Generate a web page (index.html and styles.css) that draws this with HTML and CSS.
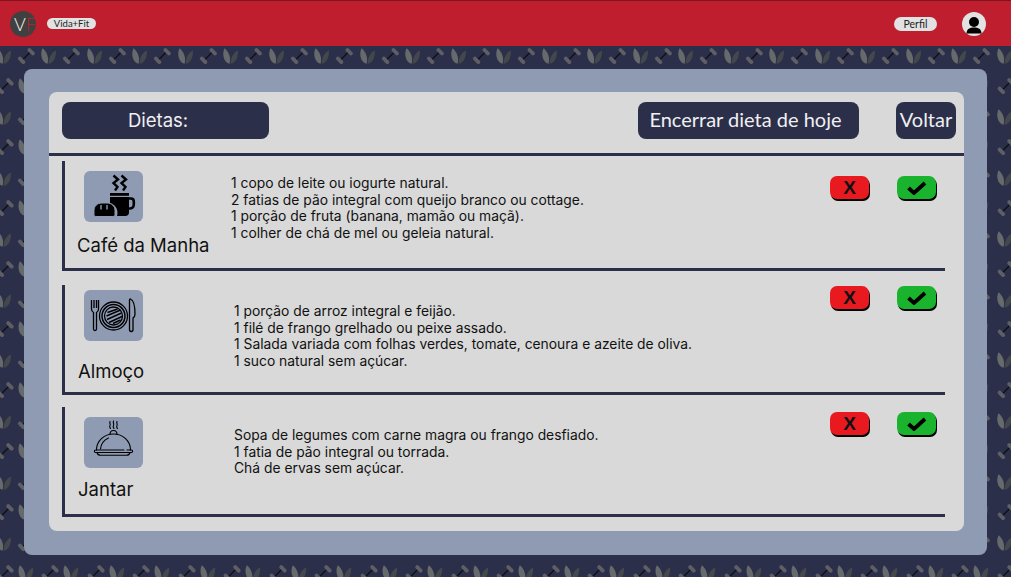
FILE: index.html
```html
<!DOCTYPE html>
<html lang="pt-BR">
<head>
    <meta charset="UTF-8">
    <meta name="viewport" content="width=device-width, initial-scale=1.0">
    <title>Vida+Fit - Dietas</title>
    <link rel="stylesheet" href="styles.css">
</head>
<body>

<header class="topbar">
    <div class="brand">
        <div class="logo"><span class="logo-v">V</span><span class="logo-f">F</span></div>
        <span class="pill pill-brand">Vida+Fit</span>
    </div>
    <div class="user">
        <span class="pill pill-perfil">Perfil</span>
        <svg class="avatar" viewBox="0 0 24 24">
            <circle cx="12" cy="12" r="12" fill="#e2e2e2"/>
            <circle cx="12" cy="10" r="5" fill="#000"/>
            <path d="M4.5 21.5c0-4.500 3.500-6 7.500-6s7.500 1.500 7.500 6z" fill="#000"/>
        </svg>
    </div>
</header>

<main class="page">
    <div class="panel">
        <section class="card">
            <div class="toolbar">
                <div class="btn btn-title">Dietas:</div>
                <button class="btn btn-end">Encerrar dieta de hoje</button>
                <button class="btn btn-back">Voltar</button>
            </div>

            <div class="meals">
                <!-- Cafe da manha -->
                <article class="meal meal-cafe">
                    <div class="meal-head">
                        <div class="meal-icon">
                            <svg viewBox="0 0 59 51" width="59" height="51">
                                <g fill="none" stroke="#000" stroke-width="2.400" stroke-linejoin="miter">
                                    <path d="M29.500 4.500l4.500 4-4.500 3.500 4 4-2.500 3.500"/>
                                    <path d="M37.500 4.500l4.500 4-4.500 3.500 4 4-2.500 3.500"/>
                                    <path d="M44 27.500h3c2 0 2.800 1 2.800 3v3c0 2.500-2 4-4 4H43" stroke-width="2.600"/>
                                </g>
                                <path d="M26 22h19v2.800H26z" fill="#000"/>
                                <path d="M26 26h19v15.500c0 2-1.500 3.500-3.500 3.500H33c1.500-4 0-11-7-13z" fill="#000"/>
                                <path d="M12 45.500c-1.500 0-2-1-2-2v-4c0-4.500 3.500-7.500 8-7.500h5c4.500 0 8 3 8 7.500v4c0 1.200-.8 2-2 2z" fill="#000" stroke="#8e9bb3" stroke-width="1"/>
                                <g stroke="#8e9bb3" stroke-width="1.400" stroke-linecap="round">
                                    <path d="M17 34.500v3.500"/>
                                    <path d="M23 34.500v3.500"/>
                                </g>
                            </svg>
                        </div>
                        <h3 class="meal-name">Café da Manha</h3>
                    </div>
                    <div class="meal-text">
                        <p>1 copo de leite ou iogurte natural.</p>
                        <p>2 fatias de pão integral com queijo branco ou cottage.</p>
                        <p>1 porção de fruta (banana, mamão ou maçã).</p>
                        <p>1 colher de chá de mel ou geleia natural.</p>
                    </div>
                    <div class="meal-actions">
                        <button class="mark mark-no">X</button>
                        <button class="mark mark-yes">
                            <svg viewBox="0 0 20 14" width="20" height="14"><path d="M1.500 7l5.500 5L18 2" fill="none" stroke="#000" stroke-width="3.800"/></svg>
                        </button>
                    </div>
                </article>

                <!-- Almoco -->
                <article class="meal meal-almoco">
                    <div class="meal-head">
                        <div class="meal-icon">
                            <svg viewBox="0 0 59 51" width="59" height="51">
                                <g fill="none" stroke="#000" stroke-width="1.300">
                                    <path d="M7.500 10v9c0 2 1 3 2 3.500V39c0 1 .5 1.500 1.500 1.500s1.500-.5 1.500-1.500V22.500c1-.5 2-1.500 2-3.500v-9"/>
                                    <path d="M10 10v8M12.500 10v8"/>
                                    <circle cx="29.500" cy="26" r="14"/>
                                    <circle cx="29.500" cy="26" r="11.500" stroke-width="1.500"/>
                                    <circle cx="29.500" cy="26" r="9"/>
                                    <path d="M23.500 22.500l10-3.500M22.500 26l14-6M23 29.500l14.500-6.500M25 32.500l13-6M29 33.500l7.500-3.500" stroke-width="1.400"/>
                                    <path d="M46.500 9c2.500 1 4.500 6 4.500 15 0 2-1 3.500-2 4v11.500c0 1.200-.7 2-1.700 2s-1.800-.8-1.800-2V10c0-.7.400-1 1-1z"/>
                                </g>
                            </svg>
                        </div>
                        <h3 class="meal-name">Almoço</h3>
                    </div>
                    <div class="meal-text">
                        <p>1 porção de arroz integral e feijão.</p>
                        <p>1 filé de frango grelhado ou peixe assado.</p>
                        <p>1 Salada variada com folhas verdes, tomate, cenoura e azeite de oliva.</p>
                        <p>1 suco natural sem açúcar.</p>
                    </div>
                    <div class="meal-actions">
                        <button class="mark mark-no">X</button>
                        <button class="mark mark-yes">
                            <svg viewBox="0 0 20 14" width="20" height="14"><path d="M1.500 7l5.500 5L18 2" fill="none" stroke="#000" stroke-width="3.800"/></svg>
                        </button>
                    </div>
                </article>

                <!-- Jantar -->
                <article class="meal meal-jantar">
                    <div class="meal-head">
                        <div class="meal-icon">
                            <svg viewBox="0 0 59 51" width="59" height="51">
                                <g fill="none" stroke="#000" stroke-width="1.100" stroke-linecap="round" stroke-linejoin="round">
                                    <path d="M26 4.500c-1 1.500 1 2.500 0 4s0 2 .5 3"/>
                                    <path d="M29.500 4c-1 1.500 1 3 0 4.500s0 2.500.5 3"/>
                                    <path d="M33 4.500c-1 1.500 1 2.500 0 4s0 2 .5 3"/>
                                    <path d="M26 17.500c0-2.500 1.500-4 3.500-4s3.500 1.500 3.500 4"/>
                                    <path d="M12.500 33c0-9 7.500-16 17-16s17 7 17 16"/>
                                    <path d="M16.500 32c.5-5 3.500-9 8-11"/>
                                    <path d="M12 33h28M43 33h4.500c1.500 0 1.500 2.500 0 2.500h-36c-1.500 0-1.500-2.500 0-2.500"/>
                                    <path d="M13 35.500c.5 1.800 2 2.800 3.500 2.800h26c1.500 0 3-1 3.500-2.800"/>
                                </g>
                            </svg>
                        </div>
                        <h3 class="meal-name">Jantar</h3>
                    </div>
                    <div class="meal-text">
                        <p>Sopa de legumes com carne magra ou frango desfiado.</p>
                        <p>1 fatia de pão integral ou torrada.</p>
                        <p>Chá de ervas sem açúcar.</p>
                    </div>
                    <div class="meal-actions">
                        <button class="mark mark-no">X</button>
                        <button class="mark mark-yes">
                            <svg viewBox="0 0 20 14" width="20" height="14"><path d="M1.500 7l5.500 5L18 2" fill="none" stroke="#000" stroke-width="3.800"/></svg>
                        </button>
                    </div>
                </article>
            </div>
        </section>
    </div>
</main>

</body>
</html>
```

FILE: styles.css
```css
* {
    box-sizing: border-box;
}

body {
    margin: 0;
    height: 100vh;
    overflow: hidden;
    display: flex;
    flex-direction: column;
    font-family: 'Inter', 'Liberation Sans', sans-serif;
    color: #111;
    /* halteres e folhas repetidos no fundo */
    background-color: #2c2f4a;
    background-image: url("data:image/svg+xml,%3Csvg xmlns='http://www.w3.org/2000/svg' width='45.5' height='60.9'%3E%3Cdefs%3E%3Cg id='f' transform='scale(1.1)'%3E%3Cpath d='M-.5 7C-6 6-7.500-2-5-7c3.500 3 6 8 4.500 14z' fill='%23666a6b'/%3E%3Cpath d='M.5 7C5 6 7 2 7-5 3-3 .5 1 .5 7z' fill='%2345484a'/%3E%3C/g%3E%3Cg id='h' fill='none' stroke-linecap='round'%3E%3Cpath d='M-4 4L4-4' stroke='%23101018' stroke-width='1.500'/%3E%3Cpath d='M-6.500 2.500l3.500 3.500M3-6l3.500 3.500' stroke='%235e5e64' stroke-width='3.800'/%3E%3C/g%3E%3C/defs%3E%3Cuse href='%23f' x='13' y='15'/%3E%3Cuse href='%23h' x='36' y='15'/%3E%3Cuse href='%23h' x='15' y='45'/%3E%3Cuse href='%23f' x='35' y='45'/%3E%3C/svg%3E");
    background-size: 45.5px 60.9px;
    background-position: -10px 41px;
}

/* barra do topo */
.topbar {
    height: 46px;
    flex: none;
    display: flex;
    align-items: center;
    justify-content: space-between;
    padding: 0 25px 0 10px;
    background: #be1e2d;
    border-top: 1px solid #7c1520;
}

.brand,
.user {
    display: flex;
    align-items: center;
}

.brand {
    gap: 11px;
}

.user {
    gap: 25px;
}

.logo {
    width: 26px;
    height: 26px;
    padding-left: 4px;
    border-radius: 50%;
    background: #404040;
    display: flex;
    align-items: center;
    font-family: 'Lato', sans-serif;
    font-size: 18px;
    font-weight: 300;
}

.logo-v {
    color: #f0f0f0;
}

.logo-f {
    color: #be1e2d;
}

.pill {
    font-family: 'Lato', sans-serif;
    background: #e2e2e2;
    color: #222;
    text-align: center;
}

.pill-brand {
    width: 49px;
    height: 11px;
    line-height: 11px;
    font-size: 9.500px;
    border-radius: 6px;
}

.pill-perfil {
    width: 43px;
    height: 14px;
    line-height: 14px;
    font-size: 10.500px;
    border-radius: 7px;
}

.avatar {
    width: 24px;
    height: 24px;
    display: block;
}

/* area central */
.page {
    flex: 1;
    padding: 23px 24px 22px;
    display: flex;
}

.panel {
    flex: 1;
    padding: 23px 23px 24px 25px;
    background: #8e9bb3;
    border-radius: 8px;
    display: flex;
}

.card {
    flex: 1;
    background: #d9d9d9;
    border-radius: 8px;
}

.toolbar {
    display: flex;
    padding: 10px 8px 14px 13px;
    border-bottom: 3px solid #2c2f4a;
}

.btn {
    height: 37px;
    line-height: 34px;
    padding: 0 0 3px;
    border: none;
    border-radius: 8px;
    background: #2c2f4a;
    color: #f0f0f0;
    font-family: 'Lato', sans-serif;
    font-size: 20px;
    text-align: center;
}

.btn-title {
    width: 207px;
    padding: 0 15px 0 0;
    line-height: 37px;
    font-family: 'Inter', sans-serif;
    font-size: 18.500px;
}

.btn-end {
    width: 221px;
    padding-right: 6px;
    margin-left: auto;
}

.btn-back {
    width: 60px;
    margin-left: 37px;
}

/* refeicoes */
.meals {
    padding: 5px 19px 0 13px;
}

.meal {
    height: 110px;
    display: flex;
    border-left: 3px solid #2c2f4a;
    border-bottom: 3px solid #2c2f4a;
}

.meal-almoco {
    margin-top: 14px;
}

.meal-jantar {
    margin-top: 12px;
}

.meal-head {
    width: 166px;
    flex: none;
}

.meal-icon {
    width: 59px;
    height: 51px;
    margin-left: 19px;
    border-radius: 6px;
    background: #8e9bb3;
}

.meal-icon svg {
    display: block;
}

.meal-name {
    margin: 0;
    font-size: 18.500px;
    font-weight: 400;
    line-height: 22px;
    white-space: nowrap;
}

.meal-text {
    flex: 1;
    font-size: 13.850px;
    line-height: 16.700px;
}

.meal-text p {
    margin: 0;
}

.meal-actions {
    display: flex;
    gap: 28px;
    margin-right: 9px;
}

.mark {
    width: 39px;
    height: 23px;
    padding: 0;
    border: none;
    border-radius: 7px;
    box-shadow: 1px 2px 0 #000;
    font-family: 'Liberation Sans', sans-serif;
    font-size: 19px;
    font-weight: 700;
    color: #111;
    display: flex;
    align-items: center;
    justify-content: center;
}

.mark-no {
    background: #e8191f;
}

.mark-yes {
    background: #1ab32d;
}

/* cada linha tem um deslocamento um pouco diferente */
.meal-cafe .meal-head {
    padding-top: 10px;
}

.meal-cafe .meal-name {
    margin: 12px 0 0 12px;
}

.meal-cafe .meal-text {
    padding-top: 14px;
}

.meal-cafe .meal-actions {
    padding-top: 15px;
}

.meal-almoco .meal-head {
    padding-top: 5px;
    width: 169px;
}

.meal-almoco .meal-name {
    margin: 19px 0 0 13px;
}

.meal-almoco .meal-text {
    padding-top: 18px;
}

.meal-almoco .meal-actions {
    padding-top: 1px;
}

.meal-jantar .meal-head {
    padding-top: 10px;
    width: 169px;
}

.meal-jantar .meal-name {
    margin: 10px 0 0 13px;
}

.meal-jantar .meal-text {
    padding-top: 20px;
}

.meal-jantar .meal-actions {
    padding-top: 5px;
}
```
